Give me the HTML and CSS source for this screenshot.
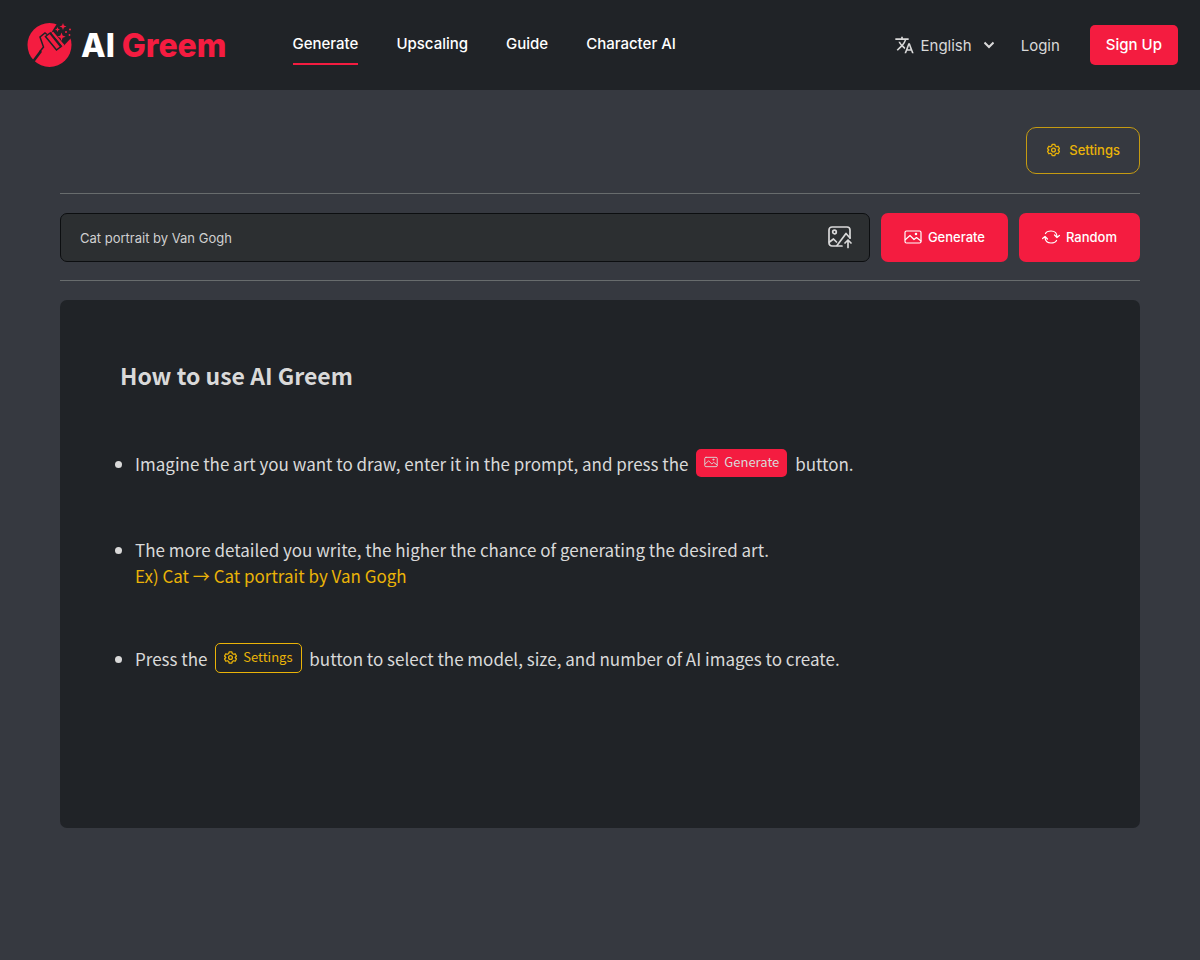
FILE: index.html
```html
<!DOCTYPE html>
<html lang="en">
<head>
<meta charset="utf-8">
<meta name="viewport" content="width=device-width, initial-scale=1">
<title>AI Greem</title>
<link rel="stylesheet" href="styles.css">
</head>
<body>
<svg class="sprite" aria-hidden="true">
  <symbol id="gear" viewBox="0 0 24 24"><path fill="none" stroke="currentColor" stroke-width="2.400" stroke-linejoin="round" d="M9.500 1.500h5l.8 3.200 2.200 1.300 3.100-.9 2.400 4.200-2.300 2.700 2.300 2.700-2.400 4.200-3.100-.9-2.200 1.300-.8 3.200h-5l-.8-3.200L6.500 18l-3.100.9L1 14.700 3.300 12 1 9.300l2.400-4.200 3.100.9 2.200-1.300z"/><circle cx="12" cy="12" r="3.500" fill="none" stroke="currentColor" stroke-width="2.400"/></symbol>
  <symbol id="picture" viewBox="0 0 18 14"><g fill="none" stroke="currentColor" stroke-width="1.200" stroke-linejoin="round" stroke-linecap="round"><rect x="1" y="1" width="16" height="12" rx="1.500"/><path d="M1.500 9.500 6 5.500l4 4 2.500-2 4.500 3.500"/><circle cx="12" cy="4" r=".7"/></g></symbol>
</svg>
<header class="topbar">
  <a class="brand" href="#">
    <svg class="brand-mark" viewBox="0 0 46 46" aria-hidden="true">
      <circle cx="23.500" cy="23" r="22" fill="#f41c40"/>
      <path fill="#202327" d="M32 0 26 9.500 38 23.500 47 14V0z"/>
      <path fill="none" stroke="#202327" stroke-width="1.500" d="m24 11-4.500 3.500 11 13.500 4.500-3.500"/>
      <path stroke="#202327" stroke-width="2.600" d="m24 10.500 11.500 14.500"/>
      <path stroke="#f41c40" stroke-width="2" d="m26.500 10.500 11 13"/>
      <path fill="none" stroke="#202327" stroke-width="1.500" d="M21 12.500 19 11l-5 4 3.500 10-4 5"/>
      <path stroke="#202327" stroke-width="2.600" d="M15 29 6 41"/>
      <g fill="#f41c40"><path d="m37 1 .9 2.600 2.600.9-2.600.9L37 8l-.9-2.600-2.600-.9 2.600-.9zM35.500 10.500l1.100 3.100 3.100 1.100-3.100 1.100-1.100 3.100-1.100-3.100-3.100-1.100 3.100-1.100zM31.500 5l.7 1.800 1.800.7-1.800.7-.7 1.800-.7-1.800-1.800-.7 1.800-.7z"/><circle cx="40" cy="10" r="1"/><circle cx="44" cy="7.500" r="1"/><circle cx="43.500" cy="13" r=".9"/></g>
    </svg>
    <span class="brand-name">AI <span class="brand-accent">Greem</span></span>
  </a>
  <nav class="nav">
    <a class="nav-link nav-active" href="#">Generate</a>
    <a class="nav-link" href="#">Upscaling</a>
    <a class="nav-link" href="#">Guide</a>
    <a class="nav-link" href="#">Character AI</a>
  </nav>
  <div class="account">
    <button class="language" type="button">
      <svg width="21" height="20" viewBox="0 0 24 24" aria-hidden="true"><path fill="currentColor" d="m12.870 15.070-2.540-2.510.03-.03A17.520 17.520 0 0 0 14.070 6H17V4h-7V2H8v2H1v2h11.170C11.500 7.920 10.440 9.750 9 11.350 8.070 10.320 7.300 9.190 6.690 8h-2c.73 1.630 1.730 3.170 2.980 4.560l-5.090 5.020L4 19l5-5 3.110 3.110zM18.500 10h-2L12 22h2l1.120-3h4.750L21 22h2zm-2.620 7 1.620-4.330L19.120 17z"/></svg>
      English
      <svg class="chevron" width="10" height="8" viewBox="0 0 10 8" aria-hidden="true"><path d="m.5 1.500 4.500 4.500 4.500-4.500" fill="none" stroke="currentColor" stroke-width="2"/></svg>
    </button>
    <a class="login" href="#">Login</a>
    <a class="signup" href="#">Sign Up</a>
  </div>
</header>
<main class="page">
  <div class="toolbar">
    <button class="settings" type="button"><svg width="13" height="14" aria-hidden="true"><use href="#gear"/></svg>Settings</button>
  </div>
  <form class="prompt">
    <div class="field">
      <input class="field-input" type="text" aria-label="Prompt" placeholder="Cat portrait by Van Gogh">
      <button class="upload" type="button" aria-label="Upload image">
        <svg width="24" height="23" viewBox="0 0 24 23" fill="none" stroke="currentColor" stroke-width="1.700" stroke-linecap="round" stroke-linejoin="round" aria-hidden="true"><path d="M14 20H4a3 3 0 0 1-3-3V4a3 3 0 0 1 3-3h15a3 3 0 0 1 3 3v8"/><circle cx="6.500" cy="6" r="1.800"/><path d="m1.500 16 4-3 3 3M9 19.500l9-12L22 12M20 21.500V14m-3 3 3-3 3 3"/></svg>
      </button>
    </div>
    <button class="action" type="submit"><svg width="18" height="14" aria-hidden="true"><use href="#picture"/></svg>Generate</button>
    <button class="action" type="button"><svg width="18" height="14" viewBox="0 0 18 14" fill="none" stroke="currentColor" stroke-width="1.200" stroke-linecap="round" stroke-linejoin="round" aria-hidden="true"><path d="M3.500 3.500C4.500 1.500 6 1 9 1s6 1.500 6 6M14.500 10.500C13.500 12.500 12 13 9 13s-6-1.500-6-6M12.500 5l2.500 2.500L17.400 5.500M.6 8.500 3 6.500 5.500 9"/></svg>Random</button>
  </form>
  <section class="guide">
    <h1 class="guide-title">How to use AI Greem</h1>
    <ul class="steps">
      <li>Imagine the art you want to draw, enter it in the prompt, and press the <span class="tag tag-red"><svg width="14" height="12" aria-hidden="true"><use href="#picture"/></svg>Generate</span> button.</li>
      <li>The more detailed you write, the higher the chance of generating the desired art.<br><span class="example">Ex) Cat → Cat portrait by Van Gogh</span></li>
      <li>Press the <span class="tag tag-gold"><svg width="13" height="13" aria-hidden="true"><use href="#gear"/></svg>Settings</span> button to select the model, size, and number of AI images to create.</li>
    </ul>
  </section>
</main>
</body>
</html>
```
FILE: styles.css
```css
* { box-sizing: border-box; }
body {
  margin: 0;
  min-height: 100vh;
  background: #363940;
  color: #d9d9d9;
  font-family: Inter, "Liberation Sans", sans-serif;
}
a { color: inherit; text-decoration: none; }
button, input { font: inherit; color: inherit; }
button { cursor: pointer; }
.sprite { display: none; }

.topbar {
  display: flex;
  align-items: center;
  height: 90px;
  padding: 0 22px 0 26px;
  background: #202327;
}
.brand { display: flex; align-items: center; gap: 9px; }
.brand-mark { width: 46px; height: 46px; }
.brand-name {
  padding-top: 1px;
  color: #fff;
  font-size: 32px;
  line-height: 40px;
  font-weight: 800;
}
.brand-accent { color: #f41c40; }
.nav {
  display: flex;
  gap: 38px;
  margin-left: 66px;
  color: #fff;
  font-size: 15px;
  font-weight: 500;
}
.nav-link {
  padding: 8px 0;
  line-height: 22px;
  border-bottom: 2px solid transparent;
}
.nav-active { border-color: #f41c40; }
.account {
  display: flex;
  align-items: center;
  margin-left: auto;
  font-size: 15px;
}
.language {
  display: flex;
  align-items: center;
  gap: 6px;
  padding: 0;
  border: 0;
  background: none;
}
.chevron { margin-left: 6px; }
.login { margin: 0 30px 0 27px; }
.signup {
  padding: 10px 16px;
  border-radius: 5px;
  background: #f41c40;
  color: #fff;
  line-height: 20px;
  font-weight: 500;
}

.page { padding: 37px 60px; }
.toolbar {
  display: flex;
  justify-content: flex-end;
  padding-bottom: 19px;
  border-bottom: 1px solid #686c6d;
}
.settings {
  display: flex;
  align-items: center;
  gap: 9px;
  height: 47px;
  padding: 0 19px 1px 20px;
  border: 1px solid #c59b12;
  border-radius: 10px;
  background: none;
  color: #eab308;
  font-size: 13px;
  font-weight: 500;
}
.prompt {
  display: flex;
  gap: 11px;
  padding: 19px 0 18px;
  border-bottom: 1px solid #686c6d;
}
.field {
  display: flex;
  flex: 1;
  align-items: center;
  height: 49px;
  padding: 0 17px 0 19px;
  border: 1px solid #0c0e10;
  border-radius: 7px;
  background: #2c2f31;
}
.field-input {
  flex: 1;
  min-width: 0;
  padding: 0;
  border: 0;
  outline: 0;
  background: none;
  font-size: 13px;
}
.field-input::placeholder { color: #d0d0d0; opacity: 1; }
.upload {
  display: flex;
  padding: 0;
  border: 0;
  background: none;
}
.action {
  display: flex;
  align-items: center;
  gap: 6px;
  height: 49px;
  padding: 0 23px 1px;
  border: 0;
  border-radius: 7px;
  background: #f41c40;
  color: #fff;
  font-size: 13px;
  font-weight: 500;
}

.guide {
  min-height: 528px;
  margin-top: 19px;
  padding: 57px 60px;
  border-radius: 7px;
  background: #202327;
  font-family: "Noto Sans CJK KR", "Noto Sans CJK JP", sans-serif;
}
.guide-title {
  margin: 0 0 56px;
  font-size: 23px;
  line-height: 36px;
  font-weight: 700;
}
.steps {
  display: grid;
  gap: 54px;
  margin: 0;
  padding-left: 15px;
  font-size: 17px;
  line-height: 26px;
}
.example { color: #eab308; }
.tag {
  display: inline-flex;
  align-items: center;
  gap: 6px;
  margin: 0 4px 6px;
  padding: 0 8px 2px;
  border-radius: 5px;
  font-size: 13px;
  vertical-align: middle;
}
.tag-red { background: #f41c40; }
.tag-gold { border: 1px solid #eab308; color: #eab308; }
```
